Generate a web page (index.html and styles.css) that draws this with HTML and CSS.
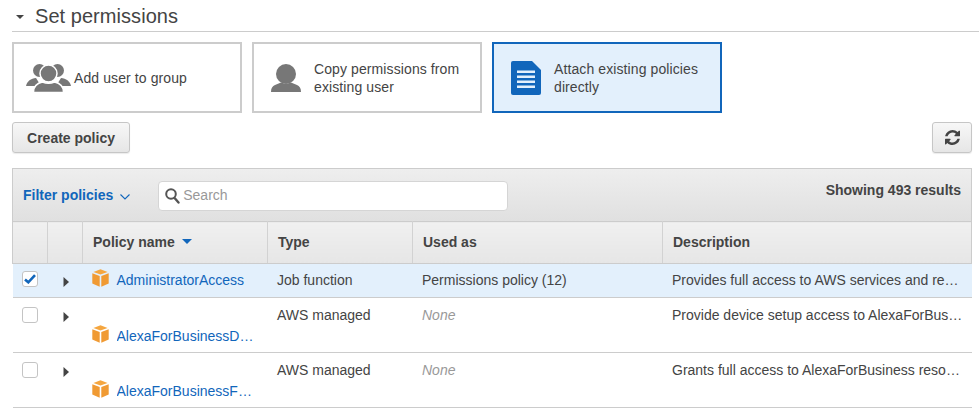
FILE: index.html
```html
<!DOCTYPE html>
<html lang="en">
<head>
  <meta charset="UTF-8" />
  <title>Set permissions</title>
  <link rel="stylesheet" href="styles.css">
</head>
<body>
  <svg class="defs" width="0" height="0">
    <symbol id="cube" viewBox="0 0 17 18">
      <path fill="#f5a63f" d="M8.5 0.3 15.6 3 8.5 5.6 1.4 3z"/>
      <path fill="#f09a33" d="M0.3 4.2 7.7 7v10.7L0.3 14.6z"/>
      <path fill="#f09a33" d="M16.7 4.2 9.3 7v10.7l7.4-3.1z"/>
    </symbol>
    <symbol id="arrow" viewBox="0 0 6 10">
      <path fill="#444" d="M0.5 0 6 5 0.5 10z"/>
    </symbol>
  </svg>

  <div class="section-title">
    <span class="caret"></span>
    <h2>Set permissions</h2>
  </div>

  <div class="cards">
    <div class="card">
      <svg class="card-icon-group" viewBox="0 0 45 29">
        <g fill="#777">
          <circle cx="13.5" cy="7.5" r="6.5"/>
          <circle cx="31.5" cy="7.5" r="6.5"/>
          <path d="M0 23c1-5 5-7.500 10-8l5 8z"/>
          <path d="M45 23c-1-5-5-7.500-10-8l-5 8z"/>
        </g>
        <g fill="#777" stroke="#fff" stroke-width="1.500">
          <circle cx="22.500" cy="10.500" r="8.500"/>
          <path d="M7.500 29.500c0-6 4-9.500 9-10.500 3.500 1.500 8.500 1.500 12 0 5 1 9 4.500 9 10.500z"/>
        </g>
      </svg>
      <span class="card-label group-label">Add user to group</span>
    </div>
    <div class="card">
      <svg class="card-icon-user" viewBox="0 0 30 28">
        <circle cx="15" cy="10" r="10" fill="#777"/>
        <path fill="#777" d="M0 28c0-4 1.500-6 4-7l6-2.500c3 1.500 7 1.500 10 0l6 2.500c2.500 1 4 3 4 7z"/>
      </svg>
      <span class="card-label">Copy permissions from existing user</span>
    </div>
    <div class="card card-active">
      <svg class="card-icon-doc" viewBox="0 0 30 34">
        <path fill="#1166bb" d="M2 0h19l9 9v23a2 2 0 0 1-2 2H2a2 2 0 0 1-2-2V2a2 2 0 0 1 2-2z"/>
        <g fill="#e3f0fc">
          <rect x="6" y="9.500" width="18" height="2.500"/>
          <rect x="6" y="14.500" width="18" height="2.500"/>
          <rect x="6" y="19.500" width="18" height="2.500"/>
          <rect x="6" y="24.500" width="18" height="2.500"/>
        </g>
      </svg>
      <span class="card-label">Attach existing policies directly</span>
    </div>
  </div>

  <div class="actions">
    <button class="btn">Create policy</button>
    <button class="btn btn-icon">
      <svg width="15" height="15" viewBox="128 128 1536 1536">
        <path fill="#444" d="M1639 1056q0 5-1 7-64 268-268 434.500t-478 166.500q-146 0-282.500-55t-243.500-157l-129 129q-19 19-45 19t-45-19-19-45v-448q0-26 19-45t45-19h448q26 0 45 19t19 45-19 45l-137 137q71 66 161 102t187 36q134 0 250-65t186-179q11-17 53-117 8-23 30-23h192q13 0 22.500 9.500t9.500 22.500zm25-800v448q0 26-19 45t-45 19h-448q-26 0-45-19t-19-45 19-45l138-138q-148-137-349-137-134 0-250 65t-186 179q-11 17-53 117-8 23-30 23h-199q-13 0-22.500-9.500t-9.500-22.500v-7q65-268 270-434.500t480-166.500q146 0 284 55.500t245 156.500l130-129q19-19 45-19t45 19 19 45z"/>
      </svg>
    </button>
  </div>

  <div class="policies">
    <div class="toolbar">
      <a class="filter">Filter policies</a>
      <svg class="chevron" width="10" height="6" viewBox="0 0 10 6">
        <path fill="none" stroke="#1166bb" stroke-width="1.100" d="M0.500 0.500 5 5 9.500 0.500"/>
      </svg>
      <div class="search">
        <svg width="15" height="16" viewBox="0 0 15 16">
          <circle cx="6" cy="6" r="4.800" fill="none" stroke="#555" stroke-width="2"/>
          <path stroke="#555" stroke-width="2.400" stroke-linecap="round" d="M9.800 10.200 13.500 14.500"/>
        </svg>
        <span class="placeholder">Search</span>
      </div>
      <span class="results">Showing 493 results</span>
    </div>

    <table class="grid">
      <colgroup>
        <col class="col-check"><col class="col-expand"><col class="col-name">
        <col class="col-type"><col class="col-used"><col class="col-desc">
      </colgroup>
      <thead>
        <tr>
          <th></th>
          <th></th>
          <th>Policy name <span class="sort"></span></th>
          <th>Type</th>
          <th>Used as</th>
          <th>Description</th>
        </tr>
      </thead>
      <tbody>
        <tr class="row-selected">
          <td class="cell-check">
            <span class="checkbox">
              <svg width="12" height="10" viewBox="0 0 12 10">
                <path fill="none" stroke="#1166bb" stroke-width="2.600" d="M1 5.500 4.300 8.300 11 1.200"/>
              </svg>
            </span>
          </td>
          <td class="cell-expand"><svg class="arrow"><use href="#arrow"/></svg></td>
          <td class="cell-name">
            <div class="name-inline">
              <svg class="cube"><use href="#cube"/></svg>
              <a>AdministratorAccess</a>
            </div>
          </td>
          <td>Job function</td>
          <td>Permissions policy (12)</td>
          <td><div class="clip">Provides full access to AWS services and resources.</div></td>
        </tr>
        <tr class="row-tall">
          <td class="cell-check"><span class="checkbox"></span></td>
          <td class="cell-expand"><svg class="arrow"><use href="#arrow"/></svg></td>
          <td class="cell-name">
            <div class="name-wrap">
              <svg class="cube"><use href="#cube"/></svg>
              <a class="clip">AlexaForBusinessDeviceSetup</a>
            </div>
          </td>
          <td>AWS managed</td>
          <td class="none">None</td>
          <td><div class="clip">Provide device setup access to AlexaForBusiness services</div></td>
        </tr>
        <tr class="row-tall">
          <td class="cell-check"><span class="checkbox"></span></td>
          <td class="cell-expand"><svg class="arrow"><use href="#arrow"/></svg></td>
          <td class="cell-name">
            <div class="name-wrap">
              <svg class="cube"><use href="#cube"/></svg>
              <a class="clip">AlexaForBusinessFullAccess</a>
            </div>
          </td>
          <td>AWS managed</td>
          <td class="none">None</td>
          <td><div class="clip">Grants full access to AlexaForBusiness resources and access</div></td>
        </tr>
      </tbody>
    </table>
  </div>
</body>
</html>
```

FILE: styles.css
```css
* { box-sizing: border-box; margin: 0; padding: 0; }

body {
  font-family: 'Liberation Sans', Arial, sans-serif;
  font-size: 14px;
  color: #444;
  background: #fff;
  overflow: hidden;
  height: 410px;
}

.defs { position: absolute; }

a { color: #1166bb; }

/* Section heading */
.section-title {
  display: flex;
  align-items: center;
  height: 32px;
  margin-left: 12px;
  border-bottom: 1px solid #ccc;
}

.section-title h2 {
  font-size: 20px;
  font-weight: normal;
  line-height: 30px;
  margin-left: 11px;
  letter-spacing: 0.05px;
}

.caret {
  width: 0;
  height: 0;
  margin-left: 4px;
  margin-top: 2px;
  border-left: 4.500px solid transparent;
  border-right: 4.500px solid transparent;
  border-top: 4px solid #444;
}

/* Permission option cards */
.cards {
  display: flex;
  gap: 10px;
  margin: 10px 0 0 12px;
}

.card {
  display: flex;
  align-items: center;
  width: 230px;
  height: 71px;
  border: 2px solid #ccc;
  padding-left: 12px;
  line-height: 18px;
}

.card-active {
  border-color: #1166bb;
  background: #e3f0fc;
  padding-left: 17px;
}

.card-icon-group { width: 45px; height: 29px; flex: none; margin-right: 3px; }
.card-icon-user { width: 30px; height: 28px; flex: none; margin: 0 13px 0 5px; }
.card-icon-doc { width: 30px; height: 34px; flex: none; margin-right: 13px; }

.card-label { width: 160px; letter-spacing: 0.1px; }
.group-label { width: auto; }

/* Buttons */
.actions {
  display: flex;
  justify-content: space-between;
  margin: 9px 7px 0 12px;
}

.btn {
  height: 31px;
  width: 118px;
  font-family: inherit;
  font-size: 14px;
  font-weight: bold;
  color: #444;
  border: 1px solid #c6c6c6;
  border-radius: 3px;
  background: linear-gradient(#f7f7f7, #e6e6e6);
  box-shadow: 0 1px 1px rgba(0,0,0,0.08);
}

.btn-icon {
  width: 40px;
  display: flex;
  align-items: center;
  justify-content: center;
}

/* Policies table */
.policies {
  margin: 15px 7px 0 12px;
}

.toolbar {
  display: flex;
  align-items: center;
  height: 53px;
  padding: 0 10px 0 10px;
  border: 1px solid #ccc;
  border-bottom: none;
  background: linear-gradient(#eee, #e0e0e0);
}

.filter {
  font-weight: bold;
  margin-top: -1px;
}

.chevron { margin: 3px 0 0 7px; }

.search {
  display: flex;
  align-items: center;
  gap: 4px;
  width: 350px;
  height: 30px;
  margin: 1px 0 0 28px;
  padding-left: 6px;
  background: #fff;
  border: 1px solid #d5d5d5;
  border-radius: 4px;
  color: #999;
}

.placeholder { margin: -2px 0 0 -1px; }

.results {
  margin: -10px 0 0 auto;
  font-weight: bold;
}

.grid {
  width: 960px;
  table-layout: fixed;
  border-collapse: collapse;
}

.col-check { width: 35px; }
.col-expand { width: 35px; }
.col-name { width: 185px; }
.col-type { width: 145px; }
.col-used { width: 250px; }

.grid th {
  height: 42px;
  padding: 0 9px 2px 10px;
  text-align: left;
  font-size: 14px;
  font-weight: bold;
  background: linear-gradient(#f0f0f0, #e6e6e6);
  border: 1px solid #ccc;
  border-left-color: #d2d2d2;
  border-right-color: #d2d2d2;
}

.grid th:first-child { border-left-color: #ccc; }
.grid th:last-child { border-right-color: #ccc; }

.sort {
  display: inline-block;
  margin: 0 0 2px 3px;
  vertical-align: middle;
  border-left: 5px solid transparent;
  border-right: 5px solid transparent;
  border-top: 5px solid #1166bb;
}

.grid td {
  height: 34px;
  padding: 0 9px 2px 9.500px;
  border-bottom: 1px solid #ccc;
  vertical-align: middle;
}

.row-selected td { background: #e3f0fc; }

.row-tall td {
  height: 55px;
  vertical-align: top;
  padding-top: 9px;
}

.grid .cell-check { padding: 0 0 0 9px; }

.grid .cell-expand { padding: 0 0 0 15px; }

.grid .cell-name { padding-left: 9px; }

.row-tall .cell-check { padding-top: 9px; }
.row-tall .cell-expand { padding-top: 14px; }

.row-selected .cell-check { padding-bottom: 4px; }
.row-selected .cell-expand { padding-top: 2px; }

.checkbox {
  display: flex;
  align-items: center;
  justify-content: center;
  width: 16px;
  height: 16px;
  background: #fff;
  border: 1px solid #c4c4c4;
  border-radius: 3px;
}

.arrow {
  display: block;
  width: 6px;
  height: 10px;
}

.cube {
  display: block;
  flex: none;
  width: 17px;
  height: 18px;
}

.name-inline {
  display: flex;
  align-items: flex-start;
  gap: 8px;
}

.name-inline .cube { margin-top: -3px; }

.name-wrap {
  display: flex;
  gap: 8px;
  margin-top: 18px;
}

.name-wrap .clip { margin-top: 3px; }

.clip {
  display: block;
  overflow: hidden;
  white-space: nowrap;
  text-overflow: ellipsis;
  min-width: 0;
}

.none {
  font-style: italic;
  color: #999;
}
```
